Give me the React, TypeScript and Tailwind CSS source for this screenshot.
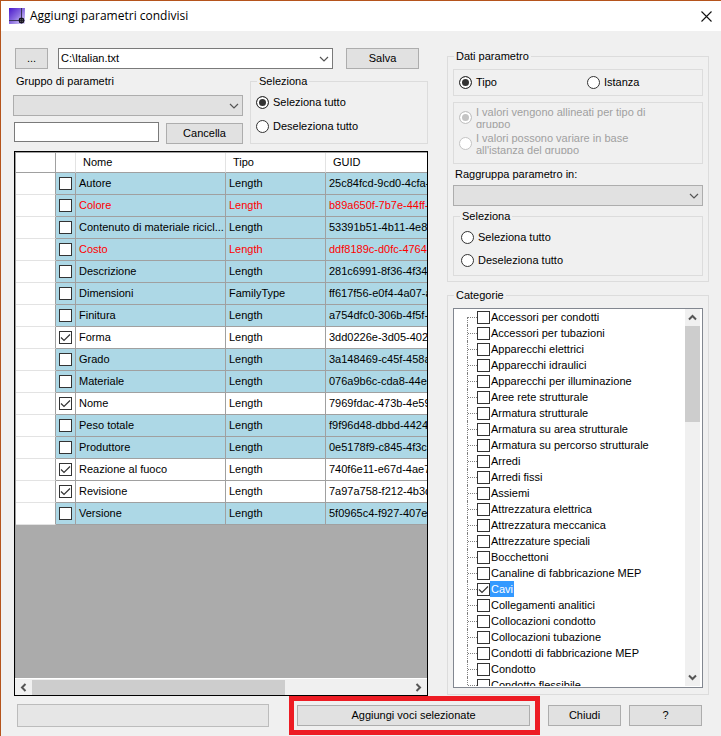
import { useState } from 'react';
import type { ReactNode } from 'react';
import clsx from 'clsx';

type Param = { name: string; type: string; guid: string; checked?: boolean; red?: boolean };

const PARAMS: Param[] = [
  { name: 'Autore', type: 'Length', guid: '25c84fcd-9cd0-4cfa-' },
  { name: 'Colore', type: 'Length', guid: 'b89a650f-7b7e-44ff-8', red: true },
  { name: 'Contenuto di materiale ricicl...', type: 'Length', guid: '53391b51-4b11-4e8a' },
  { name: 'Costo', type: 'Length', guid: 'ddf8189c-d0fc-4764-', red: true },
  { name: 'Descrizione', type: 'Length', guid: '281c6991-8f36-4f34-' },
  { name: 'Dimensioni', type: 'FamilyType', guid: 'ff617f56-e0f4-4a07-a' },
  { name: 'Finitura', type: 'Length', guid: 'a754dfc0-306b-4f5f-b' },
  { name: 'Forma', type: 'Length', guid: '3dd0226e-3d05-402a', checked: true },
  { name: 'Grado', type: 'Length', guid: '3a148469-c45f-458a' },
  { name: 'Materiale', type: 'Length', guid: '076a9b6c-cda8-44ea' },
  { name: 'Nome', type: 'Length', guid: '7969fdac-473b-4e59', checked: true },
  { name: 'Peso totale', type: 'Length', guid: 'f9f96d48-dbbd-4424-' },
  { name: 'Produttore', type: 'Length', guid: '0e5178f9-c845-4f3c-' },
  { name: 'Reazione al fuoco', type: 'Length', guid: '740f6e11-e67d-4ae7', checked: true },
  { name: 'Revisione', type: 'Length', guid: '7a97a758-f212-4b3d', checked: true },
  { name: 'Versione', type: 'Length', guid: '5f0965c4-f927-407e-' },
];

const CATEGORIES = [
  'Accessori per condotti',
  'Accessori per tubazioni',
  'Apparecchi elettrici',
  'Apparecchi idraulici',
  'Apparecchi per illuminazione',
  'Aree rete strutturale',
  'Armatura strutturale',
  'Armatura su area strutturale',
  'Armatura su percorso strutturale',
  'Arredi',
  'Arredi fissi',
  'Assiemi',
  'Attrezzatura elettrica',
  'Attrezzatura meccanica',
  'Attrezzature speciali',
  'Bocchettoni',
  'Canaline di fabbricazione MEP',
  'Cavi',
  'Collegamenti analitici',
  'Collocazioni condotto',
  'Collocazioni tubazione',
  'Condotti di fabbricazione MEP',
  'Condotto',
  'Condotto flessibile',
];

function AppIcon() {
  return (
    <svg width="16" height="16" viewBox="0 0 16 16" aria-hidden="true">
      <defs>
        <linearGradient id="appIcon" x1="0" y1="0" x2="1" y2="1">
          <stop offset="0" stopColor="#4a18cc" />
          <stop offset="0.5" stopColor="#8a6ce0" />
          <stop offset="1" stopColor="#e6e0fa" />
        </linearGradient>
      </defs>
      <rect width="16" height="16" fill="url(#appIcon)" />
      <path d="M12.5 0v10M0 12.5h10" stroke="#3a3558" strokeWidth="1" />
      <rect x="10.5" y="10.5" width="4" height="4" rx="1" fill="#777" stroke="#15131f" strokeWidth="1.4" />
      <path d="M12.5 10v5.5M10 12.5h5.5" stroke="#15131f" strokeWidth="0.8" />
    </svg>
  );
}

function Button({ children, className }: { children: ReactNode; className?: string }) {
  return (
    <button type="button" className={clsx('h-[21px] border border-[#adadad] bg-[#e1e1e1] text-center', className)}>
      {children}
    </button>
  );
}

function Select({ label, value, light }: { label: string; value?: string; light?: boolean }) {
  return (
    <div className="grid min-w-0 flex-1">
      <select
        aria-label={label}
        className={clsx(
          'col-start-1 row-start-1 h-[21px] w-full appearance-none border px-0.5',
          light ? 'border-[#7a7a7a] bg-white' : 'border-[#adadad] bg-[#e1e1e1]'
        )}
      >
        <option>{value}</option>
      </select>
      <svg
        className="pointer-events-none col-start-1 row-start-1 mr-1 self-center justify-self-end"
        width="10"
        height="6"
        viewBox="0 0 10 6"
        aria-hidden="true"
      >
        <path d="M1 1l4 4 4-4" fill="none" stroke="#555" strokeWidth="1.2" />
      </svg>
    </div>
  );
}

function CheckBox({ label, id, checked, onChange }: { label?: string; id?: string; checked: boolean; onChange: () => void }) {
  return (
    <span className="grid size-[13px] shrink-0">
      <input
        type="checkbox"
        id={id}
        aria-label={label}
        checked={checked}
        onChange={onChange}
        className="col-start-1 row-start-1 size-[13px] appearance-none border border-[#333] bg-white"
      />
      {checked && (
        <svg className="pointer-events-none col-start-1 row-start-1" width="13" height="13" viewBox="0 0 13 13" aria-hidden="true">
          <path d="M2 6.5l3 3 6-6" fill="none" stroke="#333" strokeWidth="1.2" />
        </svg>
      )}
    </span>
  );
}

type RadioProps = { name: string; label: string; defaultChecked?: boolean; disabled?: boolean };

function Radio({ name, label, defaultChecked, disabled }: RadioProps) {
  return (
    <label className={clsx('flex items-center gap-1', disabled && 'text-[#a0a0a0]')}>
      <input
        type="radio"
        name={name}
        defaultChecked={defaultChecked}
        disabled={disabled}
        className="size-[13px] shrink-0 appearance-none rounded-full border border-[#333] bg-white checked:bg-[#333] checked:shadow-[inset_0_0_0_2px_white] disabled:border-[#c4c4c4] disabled:checked:bg-[#c4c4c4]"
      />
      {disabled ? <span className="h-[22px] w-[184px] overflow-hidden leading-3">{label}</span> : <span>{label}</span>}
    </label>
  );
}

function GroupBox({ title, className, children }: { title: string; className?: string; children: ReactNode }) {
  return (
    <fieldset className={clsx('min-w-0 border border-[#dcdcdc]', className)}>
      <legend className="ml-1.5 px-0.5">{title}</legend>
      {children}
    </fieldset>
  );
}

function Arrow({ d }: { d: string }) {
  return (
    <svg width="9" height="9" viewBox="0 0 9 9" aria-hidden="true">
      <path d={d} fill="none" stroke="#555" strokeWidth="2" />
    </svg>
  );
}

function ParamTable() {
  const [checked, setChecked] = useState(PARAMS.map((p) => !!p.checked));

  const toggle = (i: number) => setChecked((prev) => prev.map((c, j) => (j === i ? !c : c)));

  return (
    <div className="ml-px mt-[7px] flex min-h-0 flex-1 flex-col border border-black bg-[#ababab]">
      <div className="min-h-0 flex-1 overflow-hidden border-l border-t border-[#a0a0a0]">
        <table className="w-full table-fixed border-separate border-spacing-0 text-left">
          <colgroup>
            <col className="w-10" />
            <col className="w-5" />
            <col className="w-[150px]" />
            <col className="w-[100px]" />
            <col />
          </colgroup>
          <thead>
            <tr className="h-5 bg-white">
              <th className="border-b border-r border-[#a0a0a0]" />
              <th className="border-b border-r border-b-[#a0a0a0] border-r-[#e3e3e3]" />
              <th className="border-b border-r border-b-[#a0a0a0] border-r-[#e3e3e3] pl-[7px] font-normal">Nome</th>
              <th className="border-b border-r border-b-[#a0a0a0] border-r-[#e3e3e3] pl-[7px] font-normal">Tipo</th>
              <th className="border-b border-[#a0a0a0] pl-[7px] font-normal">GUID</th>
            </tr>
          </thead>
          <tbody>
            {PARAMS.map((p, i) => (
              <tr key={p.guid} className={clsx('h-[22px]', checked[i] ? 'bg-white' : 'bg-[#add8e6]', p.red && 'text-[#ff0000]')}>
                <td className="border-b border-r border-b-[#e3e3e3] border-r-[#a0a0a0] bg-white" />
                <td className="border-b border-r border-[#a0a0a0] pl-[3px]">
                  <CheckBox label={p.name} checked={checked[i]} onChange={() => toggle(i)} />
                </td>
                <td className="overflow-hidden whitespace-nowrap border-b border-r border-[#a0a0a0] pl-[3px]">{p.name}</td>
                <td className="border-b border-r border-[#a0a0a0] pl-[3px]">{p.type}</td>
                <td className="overflow-hidden whitespace-nowrap border-b border-[#a0a0a0] pl-[3px]">{p.guid}</td>
              </tr>
            ))}
          </tbody>
        </table>
      </div>

      {/* Horizontal scroll bar */}
      <div className="flex h-[17px] items-center border-t border-white bg-[#f0f0f0]">
        <span className="flex w-[17px] justify-center">
          <Arrow d="M6.5 1L3 4.5 6.5 8" />
        </span>
        <div className="flex h-[15px] flex-1">
          <div className="w-[67%] bg-[#cdcdcd]" />
        </div>
        <span className="flex w-[17px] justify-center">
          <Arrow d="M2.5 1L6 4.5 2.5 8" />
        </span>
      </div>
    </div>
  );
}

function CategoryTree() {
  const [selected, setSelected] = useState<string[]>(['Cavi']);

  const toggle = (c: string) =>
    setSelected((prev) => (prev.includes(c) ? prev.filter((x) => x !== c) : [...prev, c]));

  return (
    <div className="mx-[5px] mb-1.5 flex min-h-0 flex-1 border border-[#828790] bg-white px-px pb-px">
      <ul className="min-w-0 flex-1 overflow-hidden pl-3">
        {CATEGORIES.map((c, i) => (
          <li key={c} className="flex h-4 items-center">
            <span className={clsx('w-0 border-l border-dotted border-[#808080]', i === 0 ? 'h-2 self-end' : 'h-4')} />
            <span className="w-[9px] border-t border-dotted border-[#808080]" />
            <CheckBox id={`cat-${i}`} checked={selected.includes(c)} onChange={() => toggle(c)} />
            <label
              htmlFor={`cat-${i}`}
              className={clsx('h-4 whitespace-nowrap px-px leading-4', c === 'Cavi' && 'bg-[#3399ff] text-white')}
            >
              {c}
            </label>
          </li>
        ))}
      </ul>

      {/* Vertical scroll bar */}
      <div className="mr-px flex w-[15px] flex-col items-center bg-[#f0f0f0]">
        <span className="flex h-[17px] items-center">
          <Arrow d="M1 6.5L4.5 3 8 6.5" />
        </span>
        <div className="w-full flex-1">
          <div className="h-[28%] w-full bg-[#cdcdcd]" />
        </div>
        <span className="flex h-[17px] items-center">
          <Arrow d="M1 2.5L4.5 6 8 2.5" />
        </span>
      </div>
    </div>
  );
}

export default function App() {
  return (
    <div className="flex h-screen flex-col overflow-hidden border-l border-t border-[#b5541c] bg-[#f0f0f0] font-['Liberation_Sans',Arial,sans-serif] text-[11px] leading-[13px] text-black">
      {/* Title bar */}
      <header className="flex h-[30px] shrink-0 items-center gap-[5px] bg-white pl-2 pr-[9px]">
        <AppIcon />
        <h1 className="flex-1 font-['Open_Sans','Noto_Sans',sans-serif] text-xs">Aggiungi parametri condivisi</h1>
        <button type="button" aria-label="Chiudi finestra">
          <svg width="11" height="11" viewBox="0 0 11 11" aria-hidden="true">
            <path d="M0.5 0.5l10 10M10.5 0.5l-10 10" stroke="#111" strokeWidth="1.1" />
          </svg>
        </button>
      </header>

      <main className="flex min-h-0 flex-1 gap-[19px] px-3">
        {/* Left: file, group and parameter list */}
        <section className="flex min-w-0 flex-1 flex-col pt-[17px]">
          <div className="flex pl-0.5 pr-[9px]">
            <Button className="mr-[10px] w-[33px]">...</Button>
            <Select label="File" value="C:\Italian.txt" light />
            <Button className="ml-[13px] w-[73px]">Salva</Button>
          </div>

          <div className="mt-1.5 flex gap-[7px]">
            <div className="flex min-w-0 flex-1 flex-col">
              <span className="mb-[7px] pl-[3px]">Gruppo di parametri</span>
              <div className="flex">
                <Select label="Gruppo di parametri" />
              </div>
              <div className="mt-1.5 flex gap-[7px] pl-px">
                <input type="text" aria-label="Filtro" className="h-5 min-w-0 flex-1 border border-[#7a7a7a] bg-white px-1" />
                <Button className="mt-px w-[77px]">Cancella</Button>
              </div>
            </div>
            <GroupBox title="Seleziona" className="w-[178px]">
              <div className="flex flex-col gap-[11px] pl-[5px] pt-2">
                <Radio name="params" label="Seleziona tutto" defaultChecked />
                <Radio name="params" label="Deseleziona tutto" />
              </div>
            </GroupBox>
          </div>

          <ParamTable />
        </section>

        {/* Right: parameter data and categories */}
        <section className="flex w-[262px] shrink-0 flex-col pt-[19px]">
          <GroupBox title="Dati parametro">
            <div className="flex flex-col px-[5px] pb-[5px] pt-1.5">
              <div className="flex h-[27px] gap-[90px] border border-[#dcdcdc] px-[5px]">
                <Radio name="kind" label="Tipo" defaultChecked />
                <Radio name="kind" label="Istanza" />
              </div>
              <div className="mt-1.5 flex h-[62px] flex-col gap-1 border border-[#dcdcdc] px-[5px] pt-[3px]">
                <Radio name="values" label="I valori vengono allineati per tipo di gruppo" defaultChecked disabled />
                <Radio name="values" label="I valori possono variare in base all'istanza del gruppo" disabled />
              </div>
              <span className="mb-1 mt-1 pl-0.5">Raggruppa parametro in:</span>
              <div className="flex">
                <Select label="Raggruppa parametro in" />
              </div>
              <GroupBox title="Seleziona" className="mt-1">
                <div className="flex flex-col gap-[10px] pb-2 pl-[7px] pt-2">
                  <Radio name="cats" label="Seleziona tutto" />
                  <Radio name="cats" label="Deseleziona tutto" />
                </div>
              </GroupBox>
            </div>
          </GroupBox>

          <fieldset className="mb-px mt-[7px] flex min-h-0 min-w-0 flex-1 flex-col border border-[#dcdcdc]">
            <legend className="mb-1.5 ml-1.5 px-0.5">Categorie</legend>
            <CategoryTree />
          </fieldset>
        </section>
      </main>

      <footer className="flex shrink-0 items-center pb-px pl-4 pr-[19px]">
        <div className="h-[23px] flex-1 border border-[#bcbcbc] bg-[#e6e6e6]" />
        <div className="ml-5 flex w-[251px] border-[5px] border-[#ed1c24] px-[3px] py-1 pr-[5px]">
          <Button className="flex-1">Aggiungi voci selezionate</Button>
        </div>
        <Button className="ml-2 w-[73px]">Chiudi</Button>
        <Button className="ml-2 w-[73px]">?</Button>
      </footer>
    </div>
  );
}
